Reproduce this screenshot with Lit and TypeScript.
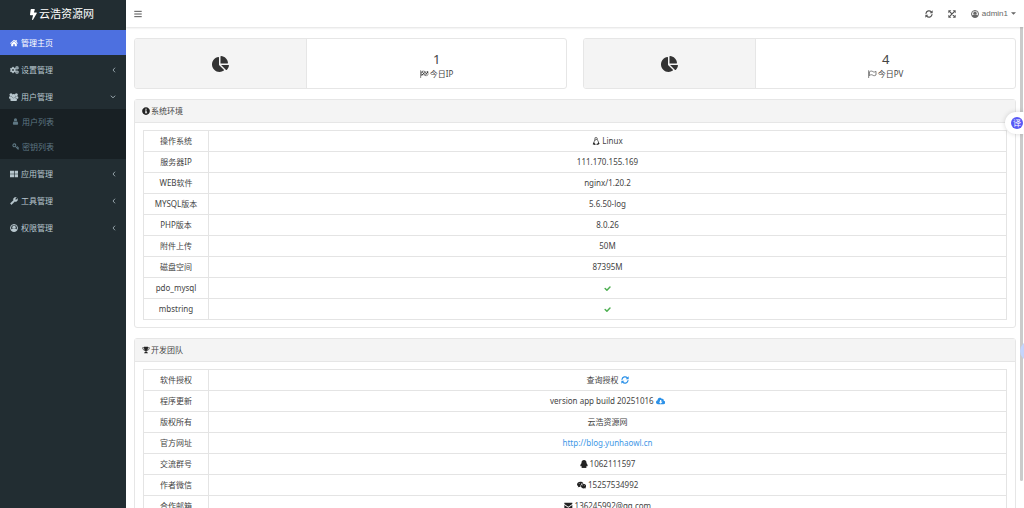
import { LitElement, html, css, svg, nothing, type TemplateResult } from "lit";
import { customElement, property, state } from "lit/decorators.js";

const GEAR =
  "M19.14 12.94c.04-.3.06-.61.06-.94 0-.32-.02-.64-.07-.94l2.03-1.58c.18-.14.23-.41.12-.61l-1.92-3.32c-.12-.22-.37-.29-.59-.22l-2.39.96c-.5-.38-1.03-.7-1.62-.94l-.36-2.54c-.04-.24-.24-.41-.48-.41h-3.84c-.24 0-.43.17-.47.41l-.36 2.54c-.59.24-1.13.57-1.62.94l-2.39-.96c-.22-.08-.47 0-.59.22L2.74 8.87c-.12.21-.08.47.12.61l2.03 1.58c-.05.3-.09.63-.09.94s.02.64.07.94l-2.03 1.58c-.18.14-.23.41-.12.61l1.92 3.32c.12.22.37.29.59.22l2.39-.96c.5.38 1.03.7 1.62.94l.36 2.54c.05.24.24.41.48.41h3.84c.24 0 .44-.17.47-.41l.36-2.54c.59-.24 1.13-.56 1.62-.94l2.39.96c.22.08.47 0 .59-.22l1.92-3.32c.12-.22.07-.47-.12-.61l-2.01-1.58zM12 15.6c-1.98 0-3.6-1.62-3.6-3.6s1.62-3.6 3.6-3.6 3.6 1.62 3.6 3.6-1.62 3.6-3.6 3.6z";

const line = (d: string, w = 2) =>
  svg`<path d=${d} fill="none" stroke="currentColor" stroke-width=${w} stroke-linecap="round" stroke-linejoin="round"/>`;
const fill = (d: string) => svg`<path d=${d} fill-rule="evenodd"/>`;

const ICONS: Record<string, [string, TemplateResult | unknown]> = {
  bolt: ["0 0 320 512", fill("M296 160H180.6l42.6-129.8C227.2 15 215.7 0 200 0H56C44 0 33.8 8.9 32.2 20.8l-32 240C-1.7 275.2 9.5 288 24 288h118.7L96.6 482.5c-3.6 15.2 8 29.5 23.3 29.5 8.4 0 16.4-4.4 20.8-12l176-304c9.3-15.9-2.2-36-20.7-36z")],
  home: ["0 0 24 24", fill("M12 2L0 12.4l1.5 1.7L12 5l10.5 9.1 1.5-1.7-4-3.5V3h-3.4v3zM12 6.6L3.6 14v8h6.2v-6h4.4v6h6.2v-8z")],
  cogs: ["0 0 27 24", svg`<g stroke="currentColor" stroke-width="1"><path transform="translate(-2 1) scale(.92)" d=${GEAR}/><path transform="translate(14.5 -1) scale(.54)" d=${GEAR}/><path transform="translate(14.5 12) scale(.54)" d=${GEAR}/></g>`],
  users: ["0 0 28 24", svg`<circle cx="6" cy="5" r="4.5"/><circle cx="22" cy="5" r="4.500"/><circle cx="14" cy="9" r="6"/><path d="M0 15c0-4 2-5 4-5h4c1 3 2 4 3 5-3 0-4 1-5 2H2c-1 0-2-1-2-2zM28 15c0-4-2-5-4-5h-4c-1 3-2 4-3 5 3 0 4 1 5 2h4c1 0 2-1 2-2zM4 21c0-6 3-7 6-7 2 2 6 2 8 0 3 0 6 1 6 7 0 2-1 3-3 3H7c-2 0-3-1-3-3z"/>`],
  user: ["0 0 24 24", svg`<circle cx="12" cy="6.5" r="5.5"/><path d="M3 20c0-6 2-8 5-8 2 2 6 2 8 0 3 0 5 2 5 8 0 2-1 3-3 3H6c-2 0-3-1-3-3z"/>`],
  key: ["0 0 24 24", svg`<circle cx="8" cy="8" r="5" fill="none" stroke="currentColor" stroke-width="3.6"/>${line("M12 12l9 9M16 16l3-3M19.5 19.5l3-3", 3.6)}`],
  blocks: ["0 0 26 24", fill("M0 2h12v9H0zM14 2h12v9H14zM0 13h12v9H0zM14 13h12v9H14z")],
  wrench: ["0 0 24 24", svg`<path transform="translate(24 0) scale(-1 1)" d="M22.7 19l-9.1-9.1c.9-2.3.4-5-1.5-6.9-2-2-5-2.4-7.4-1.3L9 6 6 9 1.6 4.7C.4 7.1.9 10.1 2.9 12.1c1.9 1.9 4.6 2.4 6.9 1.5l9.1 9.1c.4.4 1 .4 1.4 0l2.3-2.3c.5-.4.5-1.1.1-1.4z" stroke="currentColor"/>`],
  account: ["0 0 24 24", svg`<circle cx="12" cy="12" r="10.5" fill="none" stroke="currentColor" stroke-width="3"/><circle cx="12" cy="9.500" r="5"/><path d="M3 18c1-3 3-4 6-4.400 2 1.200 4 1.200 6 0 3 .4 5 1.400 6 4.400-4 6-14 6-18 0z"/>`],
  left: ["0 0 16 24", line("M11 4l-7 8 7 8", 3)],
  down: ["0 0 24 16", line("M4 4l8 7 8-7", 3)],
  bars: ["0 0 24 24", line("M2 4h20M2 12h20M2 20h20", 3)],
  refresh: ["0 0 24 24", svg`${line("M3 10a9.300 9.300 0 0 1 16-4.500M21 14a9.300 9.300 0 0 1-16 4.500", 3.6)}<path d="M23 1v9h-9zM1 23v-9h9z"/>`],
  expand: ["0 0 24 24", svg`<path d="M1 1h9L1 10zM23 1v9l-9-9zM1 23v-9l9 9zM23 23h-9l9-9z"/>${line("M5 5l14 14M19 5L5 19", 3.8)}`],
  caret: ["0 0 12 12", fill("M0 3h12L6 9z")],
  pie: ["0 0 544 512", fill("M527.79 288H290.5l158.03 158.03c6.04 6.04 15.98 6.53 22.19.68 38.7-36.46 65.32-85.61 73.13-140.86 1.34-9.46-6.51-17.85-16.06-17.85zm-15.83-64.8C503.72 103.74 408.26 8.28 288.8.04 279.68-.59 272 7.1 272 16.24V240h223.77c9.14 0 16.82-7.68 16.19-16.8zM224 288V50.71c0-9.55-8.39-17.4-17.84-16.06C86.99 51.49-4.1 155.6.14 280.37 4.5 408.51 114.83 513.59 243.03 511.98c50.4-.63 96.97-16.87 135.26-44.03 7.9-5.6 8.42-17.23 1.57-24.08L224 288z")],
  checkered: ["0 0 26 24", svg`${line("M2 2v21", 2)}${line("M5 5c4-3 7-2 10 0s6 1 9-1v11c-3 2-6 3-9 1s-6-3-10 0z", 1.6)}<path d="M5 5l4-1.500v4L5 9zM13 4l4 2v4l-4-2zM9 8l4 0v4l-4 0zM17 10l4-1v4l-4 1zM5 12l4-1v4l-4 1zM13 12l4 2v3l-4-2zM21 5l3-1v5l-3 0z"/>`],
  flag: ["0 0 26 24", svg`${line("M2 2v21", 2)}${line("M5 5c4-3 7-2 10 0s6 1 9-1v11c-3 2-6 3-9 1s-6-3-10 0z", 2)}`],
  info: ["0 0 512 512", fill("M256 8C119.043 8 8 119.083 8 256c0 136.997 111.043 248 248 248s248-111.003 248-248C504 119.083 392.957 8 256 8zm0 90c28 0 46 18.804 46 42s-18.804 42-46 42-46-18.804-46-42 18.804-42 46-42zm76 302H190v-50h30V268h-30v-50h108v132h34z")],
  trophy: ["0 0 24 24", svg`${line("M6 5H2c0 5 2 7 6 8M18 5h4c0 5-2 7-6 8", 2)}<path d="M6 2h12c0 7-1 11-4.500 13v3c2 0 4 1 4 4h-11c0-3 2-4 4-4v-3C7 13 6 9 6 2z"/>`],
  linux: ["0 0 24 24", svg`${line("M9 10c-1-8 0-9 3-9s4 2 4 6c0 3 4 6 4 11M9 9c-1 3-4 6-4 10", 2)}<path d="M10 6l2-1 3 1-2 3zM5 16l5 5-2 3-6-2zM19 16l4 4-6 4-2-2z"/>${line("M9 22h7", 1.6)}`],
  check: ["0 0 24 24", line("M4 12l6 6L20.500 7", 5)],
  cloud: ["0 0 28 24", fill("M23 11c0-1 .3-2 0-3-.7-2-3-3-5-2C16 3 13 2 10.500 2.500 7 3 4.500 6 5 10c-3 1-5 3-5 6 0 3.500 3 6 6 6h16c3.500 0 6-2.500 6-5.500S26 11.500 23 11zM12 9h4v5h4l-6 6-6-6h4z")],
  qq: ["0 0 24 24", fill("M12 0C7.500 0 4.500 3.500 4.500 8v2C2.500 12 .8 15 1.100 18c.2 1 1.300.5 2.400-1 .3 1 .8 2 1.700 2.800C3 21.500 4.500 24 8 24c2 0 3-.4 4-1 1 .6 2 1 4 1 3.500 0 5-2.500 2.800-4.200.9-.8 1.400-1.800 1.700-2.800 1.100 1.500 2.200 2 2.400 1 .3-3-1.400-6-3.400-8V8c0-4.500-3-8-7.500-8z")],
  wechat: ["0 0 28 24", fill("M10 2C4.500 2 0 5.600 0 10c0 2.500 1.500 4.600 3.500 6l-1 3.200L6 17.500c1.400.4 3 .6 4.500.5-1.500-6 3-10.500 9-10.500C18.500 4 14.500 2 10 2zM6.500 6a1.300 1.300 0 1 1 0 2.600 1.300 1.300 0 0 1 0-2.600zm7 0a1.300 1.300 0 1 1 0 2.600 1.300 1.300 0 0 1 0-2.600zM20 9c-4.500 0-8 3-8 6.700s3.500 6.600 8 6.600c1 0 2-.2 3-.5l2.600 1.400-.7-2.400c1.900-1.200 3.100-3 3.100-5.100C28 12 24.500 9 20 9zm-2.700 3.400a1.100 1.100 0 1 1 0 2.200 1.100 1.100 0 0 1 0-2.200zm5.400 0a1.100 1.100 0 1 1 0 2.200 1.100 1.100 0 0 1 0-2.200z")],
  mail: ["0 0 26 24", fill("M1 2h24v4L13 14 1 6zM1 9l12 8 12-8v13H1z")],
};

@customElement("x-icon")
export class XIcon extends LitElement {
  @property() name = "";
  static styles = css`
    :host { display: inline-flex; flex: none; height: 1em; vertical-align: middle; }
    svg { height: 100%; width: auto; fill: currentColor; display: block; }
  `;
  render() {
    const icon = ICONS[this.name];
    return icon
      ? html`<svg viewBox=${icon[0]} aria-hidden="true">${icon[1]}</svg>`
      : nothing;
  }
}

interface NavItem {
  icon: string;
  label: string;
  active?: boolean;
  children?: { icon: string; label: string }[];
}

const NAV: NavItem[] = [
  { icon: "home", label: "管理主页", active: true },
  { icon: "cogs", label: "设置管理", children: [] },
  {
    icon: "users",
    label: "用户管理",
    children: [
      { icon: "user", label: "用户列表" },
      { icon: "key", label: "密钥列表" },
    ],
  },
  { icon: "blocks", label: "应用管理", children: [] },
  { icon: "wrench", label: "工具管理", children: [] },
  { icon: "account", label: "权限管理", children: [] },
];

@customElement("side-nav")
export class SideNav extends LitElement {
  @state() private open = "用户管理";
  static styles = css`
    :host { display: block; background: #222d32; color: #b8c7ce; }
    a { color: inherit; text-decoration: none; }
    .brand {
      display: flex; align-items: center; justify-content: center; gap: 2px;
      height: 28px; padding: 0 2px 2px 0; font-size: 11px; color: #fff;
    }
    ul { list-style: none; margin: 0; padding: 0; }
    .menu { display: flex; flex-direction: column; gap: 2px; }
    .item {
      box-sizing: border-box; width: 100%; height: 25px; padding: 0 10px 0 9px;
      display: flex; align-items: center; gap: 2px;
      border: 0; background: none; color: inherit; font: inherit; text-align: left; cursor: pointer;
    }
    .glyph { width: 10px; display: flex; justify-content: center; font-size: 8px; }
    .item.active { background: #4d70e0; color: #fff; }
    .label { flex: 1; }
    .arrow { font-size: 6px; }
    .arrow.open { font-size: 4px; }
    .sub { background: #182024; color: #5f7884; }
    .sub .item { padding-left: 10px; }
    .sub .glyph { font-size: 7px; }
  `;
  render() {
    return html`
      <a class="brand" href="#"><x-icon name="bolt"></x-icon><span>云浩资源网</span></a>
      <nav><ul class="menu">${NAV.map((n) => this.item(n))}</ul></nav>
    `;
  }
  private item(n: NavItem) {
    const glyph = html`<span class="glyph"><x-icon name=${n.icon}></x-icon></span>`;
    if (!n.children)
      return html`<li><a class="item ${n.active ? "active" : ""}" href="#">${glyph}<span class="label">${n.label}</span></a></li>`;
    const open = this.open === n.label;
    return html`<li>
      <button class="item" aria-expanded=${open} @click=${() => (this.open = open ? "" : n.label)}>
        ${glyph}<span class="label">${n.label}</span>
        <x-icon class="arrow ${open ? "open" : ""}" name=${open ? "down" : "left"}></x-icon>
      </button>
      ${open && n.children.length
        ? html`<ul class="sub">${n.children.map(
            (c) => html`<li><a class="item" href="#"><span class="glyph"><x-icon name=${c.icon}></x-icon></span><span>${c.label}</span></a></li>`
          )}</ul>`
        : nothing}
    </li>`;
  }
}

@customElement("stat-card")
export class StatCard extends LitElement {
  @property() value = "";
  @property() label = "";
  @property() icon = "";
  static styles = css`
    :host {
      display: grid; grid-template-columns: 2fr 3fr; box-sizing: border-box; height: 51px;
      border: 1px solid #e6e6e6; border-radius: 3px; background: #fff; overflow: hidden;
    }
    .pic { display: flex; align-items: center; justify-content: center; background: #f4f4f4; border-right: 1px solid #e6e6e6; font-size: 16px; color: #333; }
    .data { display: flex; flex-direction: column; align-items: center; justify-content: center; padding-top: 2px; }
    .value { font-size: 13px; line-height: 18px; }
    .label { display: flex; align-items: center; gap: 1px; line-height: 12px; }
  `;
  render() {
    return html`
      <div class="pic"><x-icon name="pie"></x-icon></div>
      <div class="data">
        <span class="value">${this.value}</span>
        <span class="label"><x-icon name=${this.icon}></x-icon>${this.label}</span>
      </div>
    `;
  }
}

type Row = [string, unknown];

@customElement("info-panel")
export class InfoPanel extends LitElement {
  @property() icon = "";
  @property() heading = "";
  @property({ attribute: false }) rows: Row[] = [];
  static styles = css`
    :host { display: block; border: 1px solid #e6e6e6; border-radius: 3px; background: #fff; }
    h2 {
      margin: 0; height: 23px; padding: 0 7px; display: flex; align-items: center; gap: 1px;
      box-sizing: border-box; font-size: 8px; font-weight: 400; background: #f4f4f4; border-bottom: 1px solid #e6e6e6;
    }
    .body { padding: 7px 8px; }
    table { width: 100%; border-collapse: collapse; table-layout: fixed; }
    .key { width: 65px; }
    th, td { height: 20px; padding: 0; border: 1px solid #e4e4e4; font-weight: 400; text-align: center; line-height: 12px; }
    .cell { display: flex; align-items: center; justify-content: center; gap: 2px; }
    x-icon { color: #222; }
    a { color: #3e97e6; text-decoration: none; }
    .ok { color: #4caf50; font-size: 7px; }
    .blue { color: #2b91e8; }
  `;
  render() {
    return html`
      <h2><x-icon name=${this.icon}></x-icon><span>${this.heading}</span></h2>
      <div class="body">
        <table>
          <colgroup><col class="key" /><col /></colgroup>
          <tbody>
            ${this.rows.map(([k, v]) => html`<tr><th scope="row">${k}</th><td><div class="cell">${v}</div></td></tr>`)}
          </tbody>
        </table>
      </div>
    `;
  }
}

const ok = html`<x-icon class="ok" name="check"></x-icon>`;

const SYSTEM: Row[] = [
  ["操作系统", html`<x-icon name="linux"></x-icon>Linux`],
  ["服务器IP", "111.170.155.169"],
  ["WEB软件", "nginx/1.20.2"],
  ["MYSQL版本", "5.6.50-log"],
  ["PHP版本", "8.0.26"],
  ["附件上传", "50M"],
  ["磁盘空间", "87395M"],
  ["pdo_mysql", ok],
  ["mbstring", ok],
];

const TEAM: Row[] = [
  ["软件授权", html`查询授权<x-icon class="blue" name="refresh"></x-icon>`],
  ["程序更新", html`version app build 20251016<x-icon class="blue" name="cloud"></x-icon>`],
  ["版权所有", "云浩资源网"],
  ["官方网址", html`<a href="http://blog.yunhaowl.cn">http://blog.yunhaowl.cn</a>`],
  ["交流群号", html`<x-icon name="qq"></x-icon>1062111597`],
  ["作者微信", html`<x-icon name="wechat"></x-icon>15257534992`],
  ["合作邮箱", html`<x-icon name="mail"></x-icon>136245992@qq.com`],
];

@customElement("app-root")
export class AppRoot extends LitElement {
  static styles = css`
    :host {
      display: grid; grid-template-columns: 126px minmax(0, 1fr); position: relative;
      height: 100vh; overflow: hidden; background: #fff; color: #444;
      font-family: "Noto Sans", "Noto Sans CJK SC", sans-serif; font-size: 8px; line-height: 12px;
    }
    .page { display: flex; flex-direction: column; min-width: 0; min-height: 0; }
    header {
      flex: none; height: 27px; box-sizing: border-box; padding: 0 8px; display: flex; align-items: center;
      justify-content: space-between; color: #555; box-shadow: 0 1px 2px rgba(0, 0, 0, 0.12); z-index: 1;
    }
    .tools { display: flex; align-items: center; gap: 15px; }
    button {
      display: flex; align-items: center; gap: 3px; padding: 0; border: 0; background: none;
      color: inherit; font: inherit; cursor: pointer;
    }
    .user { font-family: "Liberation Sans", sans-serif; color: #666; }
    .caret { font-size: 5px; }
    main { flex: 1; min-height: 0; overflow: hidden; padding: 11px 8px 0; display: flex; flex-direction: column; gap: 10px; }
    .stats { display: grid; grid-template-columns: 1fr 1fr; gap: 16px; }
    info-panel { flex: none; }
    .thumb { position: absolute; right: 1px; top: 27px; width: 3px; height: 454px; background: #cbcbcb; border-radius: 0 0 2px 2px; }
    .translate {
      position: absolute; right: 0; top: 112px; width: 19px; height: 22px; padding-left: 6px; box-sizing: border-box;
      border-radius: 11px 0 0 11px; background: #fff; box-shadow: 0 0 5px rgba(0, 0, 0, 0.16); z-index: 2;
    }
    .badge {
      display: flex; align-items: center; justify-content: center; width: 12px; height: 12px;
      border-radius: 50%; background: #5959f5; color: #fff; line-height: 12px;
    }
    .orb { position: absolute; right: -16px; top: 341px; width: 20px; height: 20px; border-radius: 50%; background: #c5d4fb; z-index: 2; }
  `;
  render() {
    return html`
      <side-nav></side-nav>
      <div class="page">
        <header>
          <button aria-label="菜单"><x-icon name="bars"></x-icon></button>
          <div class="tools">
            <button aria-label="刷新"><x-icon name="refresh"></x-icon></button>
            <button aria-label="全屏"><x-icon name="expand"></x-icon></button>
            <button class="user"><x-icon name="account"></x-icon><span>admin1</span><x-icon class="caret" name="caret"></x-icon></button>
          </div>
        </header>
        <main>
          <section class="stats">
            <stat-card value="1" label="今日IP" icon="checkered"></stat-card>
            <stat-card value="4" label="今日PV" icon="flag"></stat-card>
          </section>
          <info-panel icon="info" heading="系统环境" .rows=${SYSTEM}></info-panel>
          <info-panel icon="trophy" heading="开发团队" .rows=${TEAM}></info-panel>
        </main>
      </div>
      <div class="thumb"></div>
      <button class="translate" aria-label="翻译"><span class="badge">译</span></button>
      <div class="orb"></div>
    `;
  }
}
